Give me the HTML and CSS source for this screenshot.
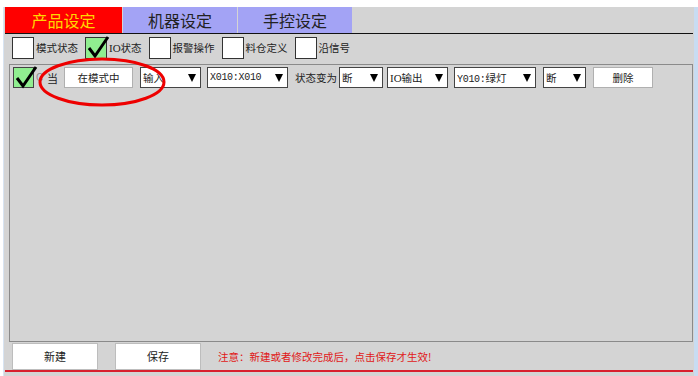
FILE: index.html
```html
<!DOCTYPE html>
<html>
<head>
<meta charset="utf-8">
<link rel="stylesheet" href="styles.css">
</head>
<body>
<div class="app">
  <div class="tabs">
    <div class="tab tab-active">产品设定</div>
    <div class="tab">机器设定</div>
    <div class="tab">手控设定</div>
  </div>
  <div class="filters">
    <div class="filter"><span class="box"></span><span class="flabel">模式状态</span></div>
    <div class="filter"><span class="box box-on"><svg viewBox="0 0 22 22" class="check"><polyline points="3,11 9,19 22,0" /></svg></span><span class="flabel"><span class="lat">IO</span>状态</span></div>
    <div class="filter"><span class="box"></span><span class="flabel">报警操作</span></div>
    <div class="filter"><span class="box"></span><span class="flabel">料仓定义</span></div>
    <div class="filter"><span class="box"></span><span class="flabel">沿信号</span></div>
  </div>
  <div class="panel">
    <div class="row">
      <span class="rbox"><svg viewBox="0 0 22 22" class="check"><polyline points="3,11 9,19 22,0" /></svg></span>
      <span class="faint">C</span>
      <span class="when">当</span>
      <span class="btn btn-mode">在模式中</span>
      <span class="sel w-61 ml-7">输入<i class="tri"></i></span>
      <span class="sel w-81 ml-6 mono">X010:X010<i class="tri"></i></span>
      <span class="rlabel">状态变为</span>
      <span class="sel w-44 ml-2">断<i class="tri"></i></span>
      <span class="sel w-61 ml-4"><span class="lat">IO</span>输出<i class="tri"></i></span>
      <span class="sel w-82 ml-6"><span class="mono">Y010:</span>绿灯<i class="tri"></i></span>
      <span class="sel w-43 ml-7">断<i class="tri"></i></span>
      <span class="btn btn-del">删除</span>
    </div>
    <svg class="ring" viewBox="0 0 130 52" width="130" height="52"><ellipse cx="65" cy="26" rx="62" ry="23" /></svg>
  </div>
  <div class="footer">
    <span class="fbtn">新建</span>
    <span class="fbtn">保存</span>
    <span class="note">注意：新建或者修改完成后，点击保存才生效!</span>
  </div>
  <div class="redline"></div>
</div>
</body>
</html>
```

FILE: styles.css
```css
* { box-sizing: border-box; }
html, body { margin: 0; padding: 0; }
body {
  width: 698px;
  height: 376px;
  background: #ffffff;
  font-family: "Noto Sans CJK SC", "Noto Sans", sans-serif;
  color: #222;
  overflow: hidden;
}
.app {
  margin-left: 3px;
  margin-top: 7px;
  width: 695px;
  height: 369px;
  background: #d4d4d4;
  border-left: 1px solid #d8e4f2;
  border-right: 4px solid #c8dcf2;
  position: relative;
}
.tabs {
  display: flex;
  margin-left: 1px;
  width: 688px;
  height: 27px;
  border-bottom: 1px solid #111;
}
.tab {
  width: 114px;
  height: 26px;
  margin-right: 1px;
  background: #a3a3f5;
  color: #222;
  font-size: 16px;
  line-height: 26px;
  text-align: center;
}
.tab-active {
  width: 117px;
  background: #ff0000;
  color: #ffd800;
}
.filters {
  display: flex;
  gap: 7px;
  margin-top: 3px;
  padding-left: 8px;
  height: 22px;
}
.filter {
  display: flex;
  align-items: center;
}
.box {
  width: 22px;
  height: 22px;
  background: #fff;
  border: 1px solid #333;
  position: relative;
}
.box-on { background: #90ee90; }
.check {
  position: absolute;
  left: 0;
  top: -1px;
  width: 22px;
  height: 22px;
  overflow: visible;
}
.check polyline {
  fill: none;
  stroke: #000;
  stroke-width: 3;
}
.flabel {
  margin-left: 2px;
  font-size: 10.5px;
  line-height: 22px;
  color: #222;
}
.lat { font-family: "Liberation Serif", serif; font-size: 11px; }
.mono { font-family: "Liberation Mono", monospace; font-size: 10px; letter-spacing: -0.3px; }
.panel {
  position: relative;
  margin-top: 5px;
  margin-left: 5px;
  width: 684px;
  height: 278px;
  border: 1px solid #8a8a8a;
  padding-top: 2px;
}
.row {
  display: flex;
  align-items: center;
  height: 21px;
  font-size: 10.5px;
}
.rbox {
  position: relative;
  margin-left: 3px;
  width: 21px;
  height: 21px;
  background: #90ee90;
  border: 1px solid #444;
}
.faint {
  margin-left: 2px;
  width: 6px;
  color: #8c8c8c;
  font-family: "Liberation Sans", sans-serif;
  font-size: 10px;
}
.when {
  margin-left: 5px;
  width: 11px;
  font-size: 11px;
}
.btn {
  height: 21px;
  background: #fff;
  border: 1px solid #b0b0b0;
  text-align: center;
  line-height: 19px;
  font-size: 10.5px;
}
.btn-mode { margin-left: 6px; width: 69px; }
.btn-del { margin-left: 7px; width: 60px; }
.sel {
  position: relative;
  height: 21px;
  background: #fff;
  border: 1px solid #444;
  padding-left: 2px;
  line-height: 19px;
  font-size: 10.5px;
  white-space: nowrap;
}
.sel.mono { font-size: 10px; }
.tri {
  position: absolute;
  right: 4px;
  top: 6px;
  width: 0;
  height: 0;
  border-left: 4.5px solid transparent;
  border-right: 4.5px solid transparent;
  border-top: 8px solid #000;
}
.w-61 { width: 61px; }
.w-81 { width: 81px; }
.w-82 { width: 82px; }
.w-44 { width: 44px; }
.w-43 { width: 43px; }
.ml-2 { margin-left: 2px; }
.ml-4 { margin-left: 4px; }
.ml-6 { margin-left: 6px; }
.ml-7 { margin-left: 7px; }
.rlabel {
  margin-left: 7px;
  font-size: 10.5px;
  width: 42px;
  white-space: nowrap;
}
.ring {
  position: absolute;
  left: 27px;
  top: -9px;
  overflow: visible;
}
.ring ellipse {
  fill: none;
  stroke: #ee0000;
  stroke-width: 3;
}
.footer {
  display: flex;
  align-items: center;
  padding-left: 8px;
  height: 28px;
}
.fbtn {
  width: 86px;
  height: 27px;
  margin-right: 17px;
  background: #fff;
  border: 1px solid #bdbdbd;
  text-align: center;
  line-height: 25px;
  font-size: 11px;
}
.note {
  margin-left: 0;
  color: #e01818;
  font-size: 10.5px;
  white-space: nowrap;
}
.redline {
  margin-left: 1px;
  width: 688px;
  height: 2px;
  background: #d8202e;
}
```
